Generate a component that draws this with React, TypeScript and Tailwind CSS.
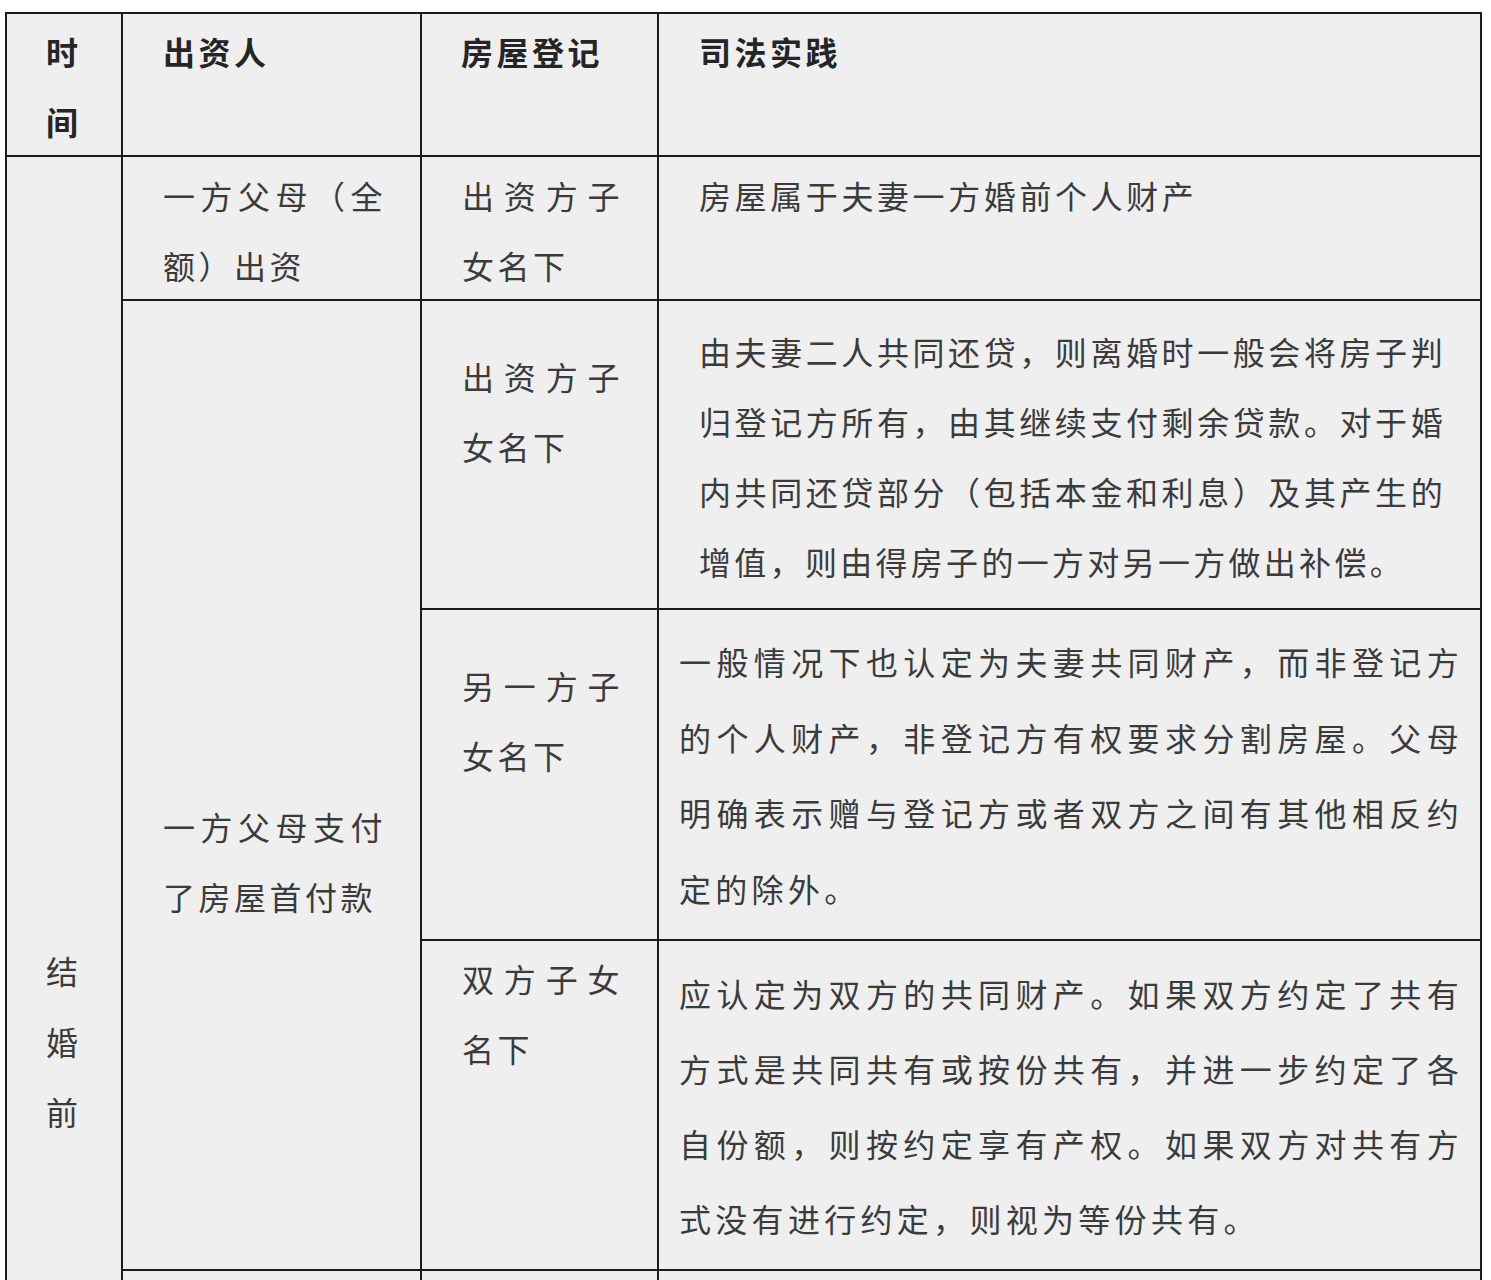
const font = { fontFamily: '"Noto Sans CJK SC", "Noto Sans", sans-serif' };

type Lines = { lines: string[]; className?: string };

// every line but the last is justified to the cell width, as in the source table
const Cell = ({ lines, className = "" }: Lines) => (
  <div className={`bg-[#efeff0] text-[32px] text-[#3b3b3b] ${className}`}>
    {lines.map((line, i) => (
      <div
        key={line}
        className={
          i < lines.length - 1
            ? "whitespace-nowrap text-justify [text-align-last:justify]"
            : "whitespace-nowrap"
        }
      >
        {line}
      </div>
    ))}
  </div>
);

export default function App() {
  return (
    <div className="min-h-screen bg-white pt-[12px] pl-[5px]" style={font}>
      <div className="grid w-[1477px] grid-cols-[114px_297px_235px_821px] grid-rows-[141px_142px_307px_329px_328px_200px] gap-[2px] bg-[#1c1c1c] p-[2px]">
        {/* header */}
        <Cell
          lines={["时", "间"]}
          className="pl-[39px] pt-[2px] font-bold leading-[70px] text-[#252525]"
        />
        <Cell
          lines={["出资人"]}
          className="pl-[40px] pt-[2px] font-bold leading-[70px] tracking-[3.5px] text-[#252525]"
        />
        <Cell
          lines={["房屋登记"]}
          className="pl-[39px] pt-[2px] font-bold leading-[70px] tracking-[3.5px] text-[#252525]"
        />
        <Cell
          lines={["司法实践"]}
          className="pl-[40px] pt-[2px] font-bold leading-[70px] tracking-[3.5px] text-[#252525]"
        />

        {/* 结婚前 */}
        <Cell
          lines={["结", "婚", "前"]}
          className="row-span-5 pl-[39px] pt-[778px] leading-[70.5px]"
        />

        {/* row: 全额出资 */}
        <Cell
          lines={["一方父母（全", "额）出资"]}
          className="pl-[40px] pr-[34px] pt-[3px] leading-[70px] tracking-[3.5px]"
        />
        <Cell
          lines={["出资方子", "女名下"]}
          className="pl-[40px] pr-[34px] pt-[3px] leading-[70px] tracking-[3.5px]"
        />
        <Cell
          lines={["房屋属于夫妻一方婚前个人财产"]}
          className="pl-[40px] pt-[3px] leading-[70px] tracking-[3.6px]"
        />

        {/* 首付款 */}
        <Cell
          lines={["一方父母支付", "了房屋首付款"]}
          className="row-span-3 pl-[40px] pr-[34px] pt-[490px] leading-[70px] tracking-[3.5px]"
        />

        <Cell
          lines={["出资方子", "女名下"]}
          className="pl-[40px] pr-[34px] pt-[40px] leading-[70px] tracking-[3.5px]"
        />
        <Cell
          lines={[
            "由夫妻二人共同还贷，则离婚时一般会将房子判",
            "归登记方所有，由其继续支付剩余贷款。对于婚",
            "内共同还贷部分（包括本金和利息）及其产生的",
            "增值，则由得房子的一方对另一方做出补偿。",
          ]}
          className="pl-[40px] pr-[34px] pt-[15px] leading-[70px] tracking-[3.3px]"
        />

        <Cell
          lines={["另一方子", "女名下"]}
          className="pl-[40px] pr-[34px] pt-[40px] leading-[70px] tracking-[3.5px]"
        />
        <Cell
          lines={[
            "一般情况下也认定为夫妻共同财产，而非登记方",
            "的个人财产，非登记方有权要求分割房屋。父母",
            "明确表示赠与登记方或者双方之间有其他相反约",
            "定的除外。",
          ]}
          className="pl-[20px] pr-[17px] pt-[14px] leading-[75.5px] tracking-[4.3px]"
        />

        <Cell
          lines={["双方子女", "名下"]}
          className="pl-[40px] pr-[34px] pt-[2px] leading-[70px] tracking-[3.5px]"
        />
        <Cell
          lines={[
            "应认定为双方的共同财产。如果双方约定了共有",
            "方式是共同共有或按份共有，并进一步约定了各",
            "自份额，则按约定享有产权。如果双方对共有方",
            "式没有进行约定，则视为等份共有。",
          ]}
          className="pl-[20px] pr-[17px] pt-[15px] leading-[75px] tracking-[4.3px]"
        />

        {/* next row, cut off */}
        <Cell lines={[]} />
        <Cell lines={[]} />
        <Cell lines={[]} />
      </div>
    </div>
  );
}
